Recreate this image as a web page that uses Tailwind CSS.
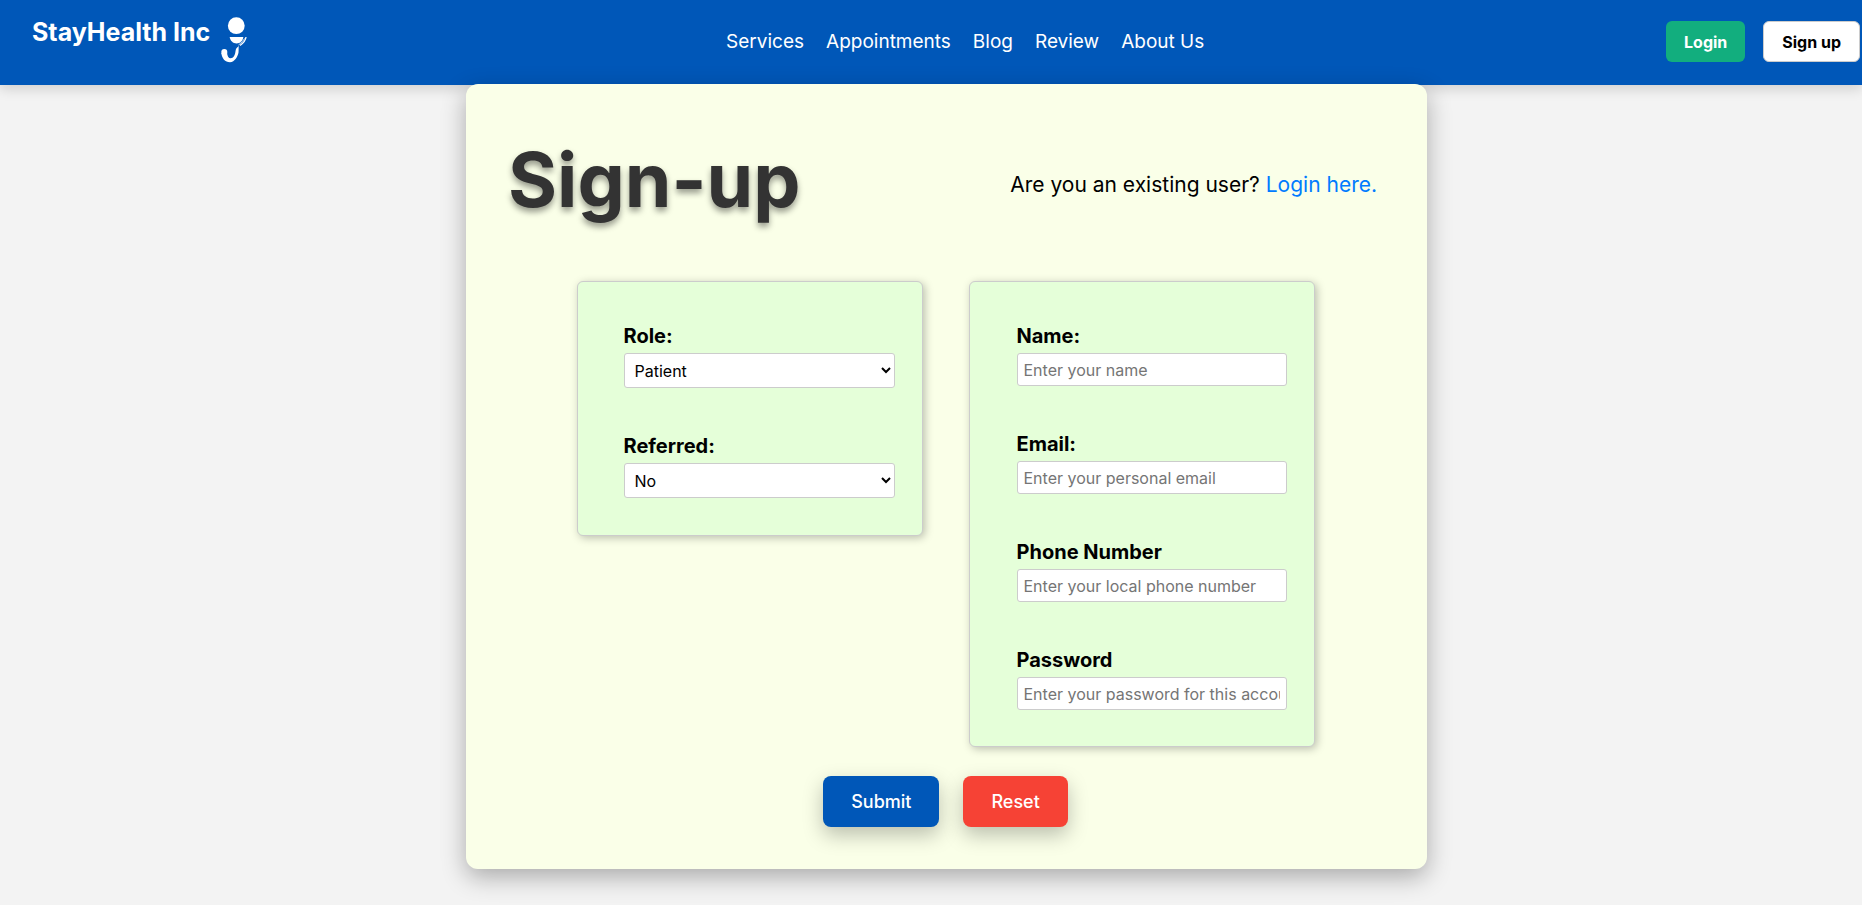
<!DOCTYPE html>
<html lang="en">
<head>
<meta charset="utf-8">
<meta name="viewport" content="width=device-width, initial-scale=1">
<title>StayHealth Inc - Sign-up</title>
<script src="https://cdn.jsdelivr.net/npm/@tailwindcss/browser@4"></script>
</head>
<body class="min-h-screen bg-[#f3f3f3] font-['Inter',sans-serif] text-black">
<header class="flex h-[85px] items-center justify-between bg-[#0057b8] pr-0.5 pb-0.5 pl-8 text-white shadow-[0_4px_12px_rgba(0,0,0,0.15)]">
  <a href="#" class="flex items-start gap-2.5 pb-0.5 text-[25px] leading-8 font-bold">
    <span>StayHealth Inc</span>
    <svg class="h-[50px] w-[28px]" viewBox="0 0 28 50" fill="none" aria-hidden="true">
      <circle cx="16.3" cy="9.700" r="8.400" fill="#fff"/>
      <path d="M9.700 21h13.600c-.3 3.800-3.200 6.400-6.700 6.400S10 24.800 9.700 21Z" fill="#fff"/>
      <circle cx="4.300" cy="36" r="3" fill="#fff"/>
      <path d="M7 36c.2 4 1.500 6.300 3.700 6.300 2.700 0 4.500-3.300 4.800-7 .2-2.300 1.200-3.800 3.300-5.300-.3 1.800 0 3.500-.3 6.500-.6 3.500-3.800 9.800-8.500 9.800C5 46.300 2 42.500 1.300 37Z" fill="#fff"/>
      <path d="M26 21c-.3 3.500-2.500 6-6 8.500" stroke="#fff" stroke-width="1.300"/>
      <path d="M24.500 22.500c-1 2-2.800 4-6 6.500" stroke="#fff" stroke-width=".8"/>
    </svg>
  </a>
  <nav class="flex gap-[22px] pt-0.5 pl-4 text-[19px]">
    <a href="#">Services</a>
    <a href="#">Appointments</a>
    <a href="#">Blog</a>
    <a href="#">Review</a>
    <a href="#">About Us</a>
  </nav>
  <div class="flex gap-[18px] font-bold">
    <button type="button" class="h-[41px] rounded-md bg-[#12ae7e] px-[18px]">Login</button>
    <button type="button" class="h-[41px] rounded-md border border-[#ccc] bg-white px-[18px] text-black">Sign up</button>
  </div>
</header>
<div class="-mt-px pl-[31px]">
<main class="mx-auto w-full max-w-[961px] rounded-xl bg-[#faffe8] pt-12 pr-11 pb-[42px] pl-[42px] shadow-[0_8px_24px_rgba(0,0,0,0.3)]">
  <div class="flex items-center justify-between pr-1.5">
    <h1 class="text-[75px] leading-[96px] font-bold text-[#333] text-shadow-[0_4px_6px_rgba(0,0,0,0.4)]">Sign-up</h1>
    <p class="pt-2.5 text-[21px]">Are you an existing user? <a href="#" class="text-[#007bff]">Login here.</a></p>
  </div>
  <form>
    <div class="mt-[53px] flex items-start justify-center gap-[46px]">
      <section class="flex w-[346px] flex-col gap-11 rounded-md border border-[#ccc] bg-[#e5ffd9] pt-10 pr-[27px] pb-[37px] pl-[46px] shadow-[2px_2px_8px_rgba(0,0,0,0.25)]">
        <div>
          <label for="role" class="mb-[3px] block text-xl leading-7 font-bold">Role:</label>
          <select id="role" class="block h-[35px] w-full rounded-[3px] border border-[#ccc] bg-white px-1.5"><option>Patient</option><option>Doctor</option></select>
        </div>
        <div>
          <label for="referred" class="mb-[3px] block text-xl leading-7 font-bold">Referred:</label>
          <select id="referred" class="block h-[35px] w-full rounded-[3px] border border-[#ccc] bg-white px-1.5"><option>No</option><option>Yes</option></select>
        </div>
      </section>
      <section class="flex w-[346px] flex-col gap-11 rounded-md border border-[#ccc] bg-[#e5ffd9] pt-10 pr-[27px] pb-9 pl-[47px] shadow-[2px_2px_8px_rgba(0,0,0,0.25)]">
        <div>
          <label for="name" class="mb-[3px] block text-xl leading-7 font-bold">Name:</label>
          <input id="name" type="text" placeholder="Enter your name" class="block h-[33px] w-full rounded-[3px] border border-[#ccc] bg-white px-1.5 placeholder:text-[#757575]">
        </div>
        <div>
          <label for="email" class="mb-[3px] block text-xl leading-7 font-bold">Email:</label>
          <input id="email" type="email" placeholder="Enter your personal email" class="block h-[33px] w-full rounded-[3px] border border-[#ccc] bg-white px-1.5 placeholder:text-[#757575]">
        </div>
        <div>
          <label for="phone" class="mb-[3px] block text-xl leading-7 font-bold">Phone Number</label>
          <input id="phone" type="tel" placeholder="Enter your local phone number" class="block h-[33px] w-full rounded-[3px] border border-[#ccc] bg-white px-1.5 placeholder:text-[#757575]">
        </div>
        <div>
          <label for="password" class="mb-[3px] block text-xl leading-7 font-bold">Password</label>
          <input id="password" type="password" placeholder="Enter your password for this account" class="block h-[33px] w-full rounded-[3px] border border-[#ccc] bg-white px-1.5 placeholder:text-[#757575]">
        </div>
      </section>
    </div>
    <div class="mt-[29px] flex justify-center gap-6 text-lg font-medium text-white">
      <button type="submit" class="h-[51px] rounded-lg bg-[#0057b8] px-7 shadow-[0_8px_20px_rgba(0,0,0,0.25)]">Submit</button>
      <button type="reset" class="h-[51px] rounded-lg bg-[#f64235] px-7 shadow-[0_8px_20px_rgba(0,0,0,0.25)]">Reset</button>
    </div>
  </form>
</main>
</div>
</body>
</html>
